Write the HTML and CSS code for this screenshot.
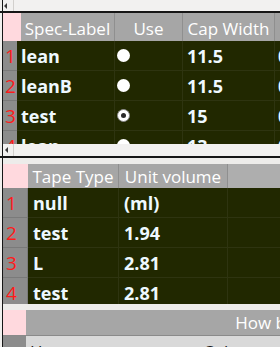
FILE: index.html
```html
<!DOCTYPE html>
<html>
<head>
<meta charset="utf-8">
<link rel="stylesheet" href="styles.css">
</head>
<body>
<div class="page">
  <div class="vline"></div>

  <div class="hscroll s-top"><span class="sbtn"><span class="arrow"></span></span></div>
  <div class="hrule h-top"></div>

  <div class="table t1">
    <div class="head">
      <div class="corner"></div>
      <div class="hc c1">Spec-Label</div>
      <div class="hc c2">Use</div>
      <div class="hc c3">Cap Width</div>
      <div class="hc c4"></div>
    </div>
    <div class="row">
      <div class="rh">1</div>
      <div class="cell c1">lean</div>
      <div class="cell c2"><span class="dot"></span></div>
      <div class="cell c3">11.5</div>
      <div class="cell c4">0</div>
    </div>
    <div class="row">
      <div class="rh">2</div>
      <div class="cell c1">leanB</div>
      <div class="cell c2"><span class="dot"></span></div>
      <div class="cell c3">11.5</div>
      <div class="cell c4">0</div>
    </div>
    <div class="row">
      <div class="rh">3</div>
      <div class="cell c1">test</div>
      <div class="cell c2"><span class="radio"></span></div>
      <div class="cell c3">15</div>
      <div class="cell c4">0</div>
    </div>
    <div class="row">
      <div class="rh">4</div>
      <div class="cell c1">lean</div>
      <div class="cell c2"><span class="dot"></span></div>
      <div class="cell c3">13</div>
      <div class="cell c4">0</div>
    </div>
  </div>

  <div class="hscroll s-mid"><span class="sbtn"><span class="arrow"></span></span></div>
  <div class="hrule h-mid"></div>
  <div class="gap g1"></div>

  <div class="table t2">
    <div class="head">
      <div class="corner"></div>
      <div class="hc c1">Tape Type</div>
      <div class="hc c2">Unit volume</div>
      <div class="hc c3"></div>
    </div>
    <div class="row">
      <div class="rh">1</div>
      <div class="cell c1">null</div>
      <div class="cell c2">(ml)</div>
      <div class="cell c3"></div>
    </div>
    <div class="row">
      <div class="rh">2</div>
      <div class="cell c1">test</div>
      <div class="cell c2">1.94</div>
      <div class="cell c3"></div>
    </div>
    <div class="row">
      <div class="rh">3</div>
      <div class="cell c1">L</div>
      <div class="cell c2">2.81</div>
      <div class="cell c3"></div>
    </div>
    <div class="row">
      <div class="rh">4</div>
      <div class="cell c1">test</div>
      <div class="cell c2">2.81</div>
      <div class="cell c3"></div>
    </div>
  </div>

  <div class="gap g2"></div>

  <div class="table t3">
    <div class="head">
      <div class="corner"></div>
      <div class="hc c1">How bright</div>
    </div>
    <div class="row">
      <div class="rh"></div>
      <div class="cell c1">Hue</div>
      <div class="cell c2">Color</div>
    </div>
  </div>
</div>
</body>
</html>
```

FILE: styles.css
```css
* { box-sizing: border-box; }

html, body {
  margin: 0;
  padding: 0;
  background: #f1f0ee;
  width: 280px;
  height: 347px;
  overflow: hidden;
}

.page {
  display: grid;
  grid-template-columns: 2px 1px 277px;
  grid-template-rows: 11px 2px 131px 12px 2px 6px 140px 6px 37px;
  font-family: "Open Sans", "DejaVu Sans", sans-serif;
}

.vline {
  grid-column: 2;
  grid-row: 1 / -1;
  background: #161616;
  z-index: 2;
}

.hrule {
  grid-column: 1 / -1;
  background: #161616;
  z-index: 3;
}
.h-top { grid-row: 2; }
.h-mid { grid-row: 5; }

.hscroll {
  grid-column: 3;
  background: #f2f1f0;
  display: flex;
}
.s-top { grid-row: 1; }
.s-mid { grid-row: 4; }

.sbtn {
  width: 11px;
  height: 100%;
  border-right: 1px solid #d2d0cd;
  display: flex;
  align-items: center;
  padding-left: 1px;
}
.s-mid .sbtn { padding-left: 2px; }

.arrow {
  width: 0;
  height: 0;
  border-top: 3px solid transparent;
  border-bottom: 3px solid transparent;
  border-right: 3px solid #3a3a3a;
}

.gap { grid-column: 3; background: #edecea; }
.g1 { grid-row: 6; }
.g2 { grid-row: 8; }

.table {
  grid-column: 3;
  overflow: hidden;
  background: #212800;
  display: flex;
  flex-direction: column;
}
.t1 { grid-row: 3; }
.t2 { grid-row: 7; }
.t3 { grid-row: 9; background: #d9d9d9; }

.head {
  display: flex;
  flex: none;
  background: #a6a6a6;
}
.corner {
  flex: none;
  background: #ffd9de;
}
.hc {
  flex: none;
  display: flex;
  justify-content: center;
  align-items: flex-end;
  color: #ffffff;
  font-size: 17px;
  white-space: nowrap;
  overflow: hidden;
  border-right: 1px solid #8f8f8f;
}

.row {
  display: flex;
  flex: none;
  height: 30px;
}
.rh {
  flex: none;
  background: #8c8c8c;
  color: #ff1a1a;
  font-size: 19px;
  display: flex;
  align-items: center;
  padding-left: 3px;
  border-bottom: 1px solid #7a7a7a;
  overflow: hidden;
}
.cell {
  flex: none;
  display: flex;
  align-items: center;
  color: #eef9ff;
  font-size: 18px;
  font-weight: 700;
  white-space: nowrap;
  overflow: hidden;
  border-right: 1px solid #2e3410;
  border-bottom: 1px solid #2e3410;
}

/* table 1 */
.t1 .head { height: 28px; }
.t1 .head .hc { padding-bottom: 1px; }
.t1 .head .corner { width: 18px; }
.t1 .head .c1 { width: 94px; }
.t1 .head .c2 { width: 68px; }
.t1 .head .c3 { width: 92px; }
.t1 .head .c4 { flex: 1; border-right: 0; background: #a2a2a2; }
.t1 .rh { width: 14px; padding-left: 2px; }
.t1 .cell.c1 { width: 98px; padding-left: 4px; }
.t1 .cell.c2 { width: 68px; padding-left: 2px; }
.t1 .cell.c3 { width: 92px; padding-left: 4px; }
.t1 .cell.c4 { flex: 1; border-right: 0; padding-left: 3px; }

.dot {
  flex: none;
  width: 13px;
  height: 13px;
  border-radius: 50%;
  background: #ffffff;
}
.radio {
  flex: none;
  width: 13px;
  height: 13px;
  border-radius: 50%;
  background: #ffffff;
  border: 1px solid #8a8a8a;
  display: flex;
  align-items: center;
  justify-content: center;
}
.radio::after {
  content: "";
  width: 5px;
  height: 5px;
  border-radius: 50%;
  background: #2a2a2a;
}

/* table 2 */
.t2 .head { height: 24px; }
.t2 .head .corner { width: 25px; }
.t2 .head .c1 { width: 91px; }
.t2 .head .c2 { width: 109px; }
.t2 .head .c3 { flex: 1; border-right: 0; background: #aeaeae; }
.t2 .rh { width: 25px; padding-left: 3px; border-right: 1px solid #7a7a7a; }
.t2 .cell.c1 { width: 91px; padding-left: 5px; }
.t2 .cell.c2 { width: 109px; padding-left: 5px; }
.t2 .cell.c3 { flex: 1; border-right: 0; }

/* table 3 */
.t3 .head { height: 26px; border-bottom: 1px solid #8a8a8a; flex: none; }
.t3 .head .hc { padding-bottom: 1px; border-right: 0; }
.t3 .head .corner { width: 23px; }
.t3 .head .c1 { width: 506px; }
.t3 .row { height: 30px; }
.t3 .rh { width: 23px; }
.t3 .cell {
  color: #1a1a1a;
  font-weight: 400;
  font-size: 17px;
  align-items: flex-start;
  padding-top: 4px;
  border: 0;
}
.t3 .cell.c1 { width: 150px; padding-left: 4px; }
.t3 .cell.c2 { width: 104px; padding-left: 27px; }
```
